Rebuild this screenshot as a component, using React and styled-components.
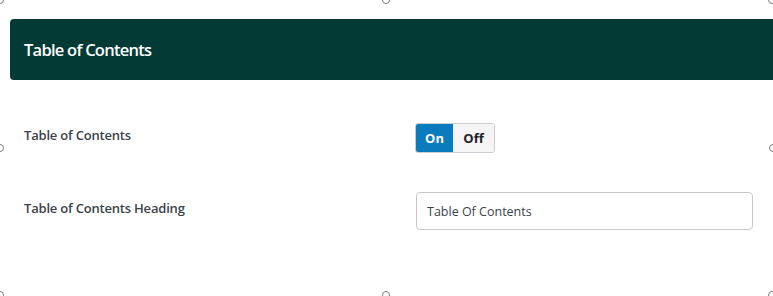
import React from "react";
import styled, { createGlobalStyle } from "styled-components";

const Global = createGlobalStyle`
    html, body{
        margin: 0;
        padding: 0;
        background: #fff;
    }
    body{
        font-family: "Open Sans", "Noto Sans", sans-serif;
        overflow: hidden;
    }
`

const Frame = styled.div`
    position: relative;
    width: 773px;
    height: 296px;
    overflow: hidden;
    background: #fff;
`

const Header = styled.div`
    margin: 19px -20px 0 10px;
    height: 61px;
    display: flex;
    align-items: center;
    padding-left: 14px;
    background: #023b36;
    border-radius: 4px;
    h2{
        margin: 0;
        font-size: 16.5px;
        font-weight: 600;
        color: #fff;
        letter-spacing: -0.75px;
    }
`

const Body = styled.div`
    padding: 43px 21px 0 24px;
    display: grid;
    grid-template-columns: 391px 1fr;
    row-gap: 39px;
    align-items: center;
`

const Label = styled.span`
    font-size: 13px;
    font-weight: 600;
    color: #3c434a;
    letter-spacing: -0.2px;
    margin-top: -6px;
`

const Toggle = styled.div`
    display: inline-flex;
    height: 30px;
    width: 80px;
    border-radius: 3px;
    overflow: hidden;
    border: 1px solid #c9cdd1;
    box-sizing: border-box;
`

const ToggleSide = styled.button`
    flex: ${p => p.$on ? "0 0 37px" : "1"};
    border: none;
    margin: 0;
    padding: 0;
    font-family: inherit;
    font-size: 13px;
    font-weight: 700;
    background: ${p => p.$active ? "#0a7bbd" : "#f5f5f5"};
    color: ${p => p.$active ? "#fff" : "#1d2327"};
`

const Input = styled.input`
    display: block;
    width: 337px;
    height: 38px;
    box-sizing: border-box;
    margin-left: 1px;
    padding: 0 10px;
    border: 1px solid #c6c9cc;
    border-radius: 4px;
    font-family: inherit;
    font-size: 12.5px;
    color: #3c434a;
    outline: none;
`

const Handle = styled.span`
    position: absolute;
    width: 6px;
    height: 6px;
    border: 1px solid #7d7d7d;
    border-radius: 50%;
    background: #fff;
    left: ${p => p.$x - 4}px;
    top: ${p => p.$y - 4}px;
`

const handles = [
    [0, 0], [386, 0], [772, 0],
    [0, 148], [773, 148],
    [0, 295], [386, 295], [772, 295],
]

export default function App(){
    return (
        <Frame>
            <Global />
            <Header><h2>Table of Contents</h2></Header>
            <Body>
                <Label>Table of Contents</Label>
                <div>
                    <Toggle>
                        <ToggleSide $on $active>On</ToggleSide>
                        <ToggleSide>Off</ToggleSide>
                    </Toggle>
                </div>
                <Label>Table of Contents Heading</Label>
                <div>
                    <Input defaultValue="Table Of Contents" />
                </div>
            </Body>
            {handles.map(([x, y]) => <Handle key={x + "-" + y} $x={x} $y={y} />)}
        </Frame>
    )
}
